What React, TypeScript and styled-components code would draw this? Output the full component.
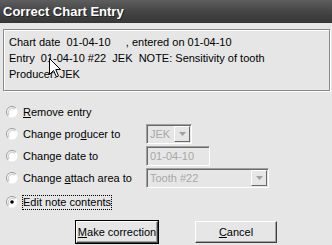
import React from 'react';
import styled, { createGlobalStyle } from 'styled-components';

const GlobalStyle = createGlobalStyle`
  html, body {
    margin: 0;
    padding: 0;
    background: #e6e6e6;
  }
  body {
    font-family: "Liberation Sans", Arial, sans-serif;
    font-size: 11px;
    color: #000;
  }
`

interface OptionRow {
  label: React.ReactNode,
  checked?: boolean,
  control?: React.ReactNode,
}

const Radio = ({ checked }: { checked?: boolean }) => (
  <RadioBox width="12" height="12" viewBox="0 0 12 12">
    <circle cx="6" cy="6" r="5.5" fill="#ffffff" />
    <path d="M9.9 2.1 A5.5 5.5 0 0 0 2.1 9.9" fill="none" stroke="#9a9a9a" />
    <path d="M8.8 3.2 A4 4 0 0 0 3.2 8.8" fill="none" stroke="#cfcfcf" strokeWidth="1.2" />
    {checked && <circle cx="6" cy="6" r="1.8" fill="#000" />}
  </RadioBox>
)

const Combo = ({ value, width }: { value: string, width: number }) => (
  <Field style={{ width }}>
    <FieldText>{value}</FieldText>
    <DropBtn>
      <svg width="7" height="4" viewBox="0 0 7 4"><path d="M0 0 H7 L3.5 4 Z" fill="#a0a0a0" /></svg>
    </DropBtn>
  </Field>
)

const Cursor = () => (
  <Pointer width="13" height="20" viewBox="0 0 13 20">
    <path d="M0.5 0.5 V16.5 L4.5 12.5 L7.5 19 L9.5 18 L6.8 11.5 H11.5 Z" fill="#fff" stroke="#000" strokeLinejoin="miter" />
  </Pointer>
)

const App = () => {
  const rows: Array<OptionRow> = [
    { label: <><u>R</u>emove entry</> },
    { label: <>Change pro<u>d</u>ucer to</>, control: <Combo value="JEK" width={46} /> },
    { label: <>Change date to</>, control: <Field style={{ width: 64 }}><FieldText>01-04-10</FieldText></Field> },
    { label: <>Change <u>a</u>ttach area to</>, control: <Combo value="Tooth #22" width={123} /> },
  ]
  return (
    <Window>
      <GlobalStyle />
      <TitleBar>Correct Chart Entry</TitleBar>
      <Body>
        <InfoBox>
          <div>Chart date&nbsp; 01-04-10 &nbsp; &nbsp; , entered on 01-04-10</div>
          <div>Entry&nbsp; 01-04-10 #22&nbsp; JEK&nbsp; NOTE: Sensitivity of tooth</div>
          <div>Producer: JEK</div>
          <Cursor />
        </InfoBox>
        <Options>
          {rows.map((r, i) => (
            <Row key={i}>
              <Radio />
              <Label>{r.label}</Label>
              {r.control}
            </Row>
          ))}
          <Row $last>
            <Radio checked />
            <FocusLabel>Edit note contents</FocusLabel>
          </Row>
        </Options>
        <Buttons>
          <Button $default><span><u>M</u>ake correction</span></Button>
          <Button><span><u>C</u>ancel</span></Button>
        </Buttons>
      </Body>
    </Window>
  )
};

const Window = styled.div`
  width: 332px;
  height: 245px;
  overflow: hidden;
  background: #e6e6e6;
`
const TitleBar = styled.div`
  height: 23px;
  box-sizing: border-box;
  padding: 4px 0 0 3px;
  background: linear-gradient(180deg, #5e5e5e 0%, #474747 45%, #363636 100%);
  color: #fff;
  font-weight: bold;
  font-size: 13px;
  line-height: 15px;
  text-shadow: 1px 1px 0 #222;
`
const Body = styled.div`
  padding: 6px 2px 0 3px;
`
const InfoBox = styled.div`
  position: relative;
  height: 62px;
  box-sizing: border-box;
  border: 1px solid #8a8a8a;
  box-shadow: inset 1px 1px 0 #fff, 1px 1px 0 #fff;
  padding: 4px 0 0 5px;
  line-height: 16px;
`
const Pointer = styled.svg`
  position: absolute;
  left: 45px;
  top: 28px;
`
const Options = styled.div`
  margin-top: 10px;
  display: flex;
  flex-direction: column;
`
const Row = styled.div<{ $last?: boolean }>`
  height: 22px;
  display: flex;
  align-items: center;
  padding-left: 3px;
  margin-top: ${p => p.$last ? '2px' : '0'};
`
const RadioBox = styled.svg`
  flex: none;
  margin-right: 5px;
`
const Label = styled.span`
  width: 123px;
  flex: none;
`
const FocusLabel = styled.span`
  margin-left: -1px;
  padding: 1px 1px 2px 1px;
  outline: 1px dotted #000;
  outline-offset: -1px;
`
const Field = styled.div`
  height: 20px;
  box-sizing: border-box;
  display: flex;
  align-items: center;
  border-top: 1px solid #a0a0a0;
  border-left: 1px solid #a0a0a0;
  border-right: 1px solid #fff;
  border-bottom: 1px solid #fff;
  box-shadow: inset 1px 1px 0 #696969, inset -1px -1px 0 #e6e6e6;
  padding: 0 2px 0 3px;
  color: #a8a8a8;
  font-size: 11px;
`
const FieldText = styled.span`
  flex: 1;
`
const DropBtn = styled.div`
  width: 16px;
  height: 16px;
  box-sizing: border-box;
  display: flex;
  align-items: center;
  justify-content: center;
  background: #e6e6e6;
  border-top: 1px solid #fff;
  border-left: 1px solid #fff;
  border-right: 1px solid #696969;
  border-bottom: 1px solid #696969;
  margin-right: -1px;
`
const Buttons = styled.div`
  display: flex;
  gap: 35px;
  padding-left: 72px;
  margin-top: 7px;
`
const Button = styled.div<{ $default?: boolean }>`
  width: 84px;
  height: 24px;
  box-sizing: border-box;
  display: flex;
  align-items: center;
  justify-content: center;
  border: 1px solid ${p => p.$default ? '#000' : 'transparent'};
  font-size: 11px;
  white-space: nowrap;
  span {
    display: flex;
    align-items: center;
    justify-content: center;
    width: 100%;
    height: 100%;
    box-sizing: border-box;
    border-top: 1px solid #fff;
    border-left: 1px solid #fff;
    border-right: 1px solid #404040;
    border-bottom: 1px solid #404040;
    box-shadow: inset -1px -1px 0 #a0a0a0;
  }
`

export default App;
